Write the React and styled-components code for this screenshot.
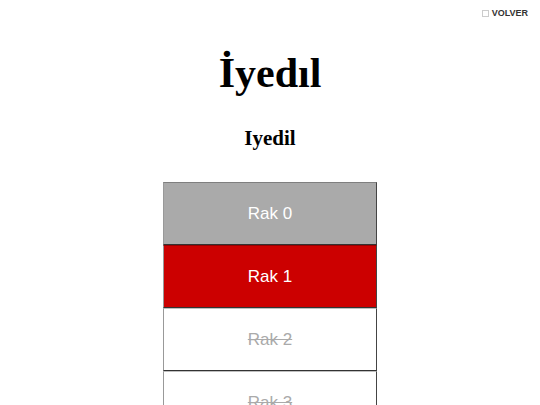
import React from "react";
import styled, { createGlobalStyle } from "styled-components";

const Global = createGlobalStyle`
  html, body { margin: 0; padding: 0; background: #fff; }
  body { font-family: "Liberation Serif", "Times New Roman", serif; }
`;

const Page = styled.div`
  width: 540px;
  height: 405px;
  overflow: hidden;
  display: flex;
  flex-direction: column;
  align-items: center;
`;

const TopBar = styled.div`
  align-self: stretch;
  display: flex;
  justify-content: flex-end;
  padding: 8px 12px 0 0;
  height: 12px;
`;

const Back = styled.button`
  display: flex;
  align-items: center;
  gap: 3px;
  border: none;
  background: none;
  padding: 0;
  font-family: "Liberation Sans", Arial, sans-serif;
  font-weight: bold;
  font-size: 9px;
  color: #333;
  cursor: pointer;
`;

const Box = styled.span`
  width: 5px;
  height: 5px;
  border: 1px solid #ccc;
`;

const Title = styled.h1`
  font-size: 42px;
  font-weight: bold;
  margin: 31px 0 0;
  line-height: 48px;
`;

const Subtitle = styled.h2`
  font-size: 21px;
  font-weight: bold;
  margin: 29px 0 0;
  line-height: 24px;
`;

const List = styled.div`
  margin-top: 32px;
  display: flex;
  flex-direction: column;
  width: 214px;
`;

const Row = styled.div`
  height: 63px;
  box-sizing: border-box;
  border-top: 1px solid rgba(0, 0, 0, 0.25);
  border-left: 1px solid #999;
  border-right: 1px solid #444;
  border-bottom: 1px solid #333;
  display: flex;
  align-items: center;
  justify-content: center;
  font-family: "Liberation Sans", Arial, sans-serif;
  font-size: 17px;
  background: ${(p) => p.$bg};
  color: ${(p) => (p.$off ? "#aaa" : "#fff")};
  text-decoration: ${(p) => (p.$off ? "line-through" : "none")};
`;

const rows = [
  { label: "Rak 0", bg: "#aaaaaa" },
  { label: "Rak 1", bg: "#cc0000" },
  { label: "Rak 2", bg: "#fff", off: true },
  { label: "Rak 3", bg: "#fff", off: true },
];

export default function App() {
  return (
    <Page>
      <Global />
      <TopBar>
        <Back>
          <Box />
          VOLVER
        </Back>
      </TopBar>
      <Title>İyedıl</Title>
      <Subtitle>Iyedil</Subtitle>
      <List>
        {rows.map((r) => (
          <Row key={r.label} $bg={r.bg} $off={r.off}>
            {r.label}
          </Row>
        ))}
      </List>
    </Page>
  );
}
